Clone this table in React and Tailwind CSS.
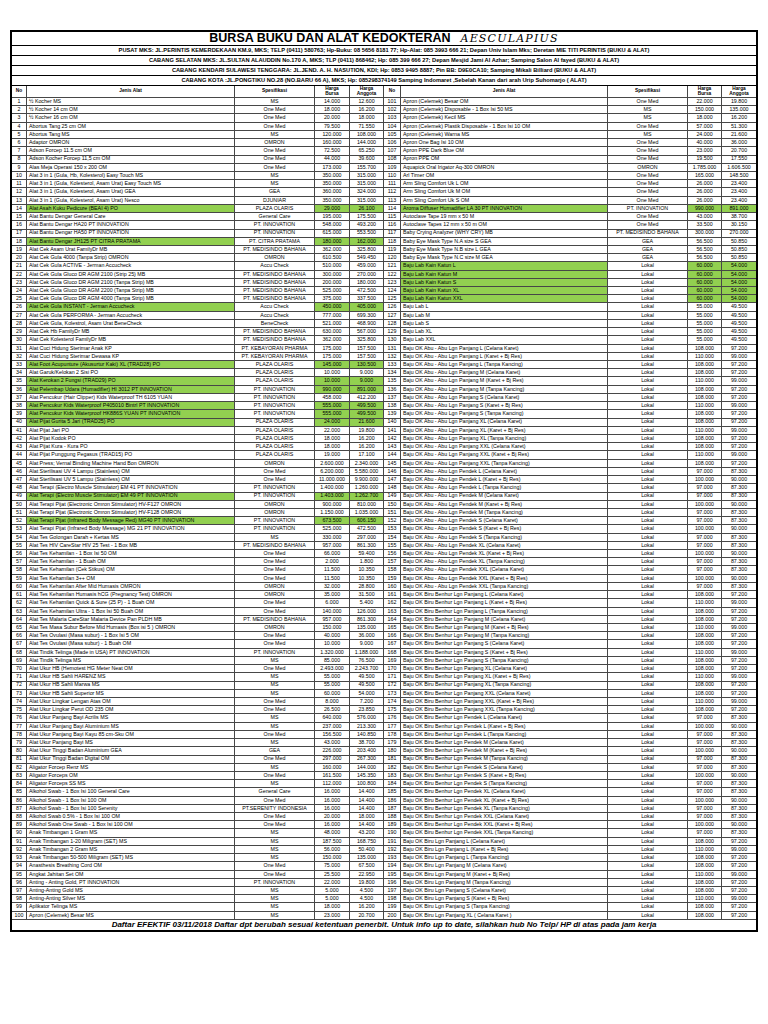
import React from "react";

const COLS = "grid grid-cols-[15px_208px_80px_35px_34px_17px_207px_80px_34px_34px]";
const LINE = "border-[#474747]";

// name | spesifikasi | harga bursa | harga anggota | g = highlighted
const LEFT = `½ Kocher MS|MS|14.000|12.600
½ Kocher 14 cm OM|One Med|18.000|16.200
½ Kocher 16 cm OM|One Med|20.000|18.000
Abortus Tang 25 cm OM|One Med|79.500|71.550
Abortus Tang MS|MS|120.000|108.000
Adaptor OMRON|OMRON|160.000|144.000
Adson Forcep 11.5 cm OM|One Med|72.500|65.250
Adson Kocher Forcep 11,5 cm OM|One Med|44.000|39.600
Alas Meja Operasi 150 x 200 OM|One Med|173.000|155.700
Alat 3 in 1 (Gula, Hb, Kolesterol) Easy Touch MS|MS|350.000|315.000
Alat 3 in 1 (Gula, Kolesterol, Asam Urat) Easy Touch MS|MS|350.000|315.000
Alat 3 in 1 (Gula, Kolesterol, Asam Urat) GEA|GEA|360.000|324.000
Alat 3 in 1 (Gula, Kolesterol, Asam Urat) Nesco|DJUNIAR|350.000|315.000
Alat Asah Kuku Pedicure (BEAI 4) PO|PLAZA OLARIS|29.000|26.100|g
Alat Bantu Dengar General Care|General Care|195.000|175.500
Alat Bantu Dengar HA20 PT INNOVATION|PT. INNOVATION|548.000|493.200
Alat Bantu Dengar HA50 PT INNOVATION|PT. INNOVATION|615.000|553.500
Alat Bantu Dengar JH125 PT CITRA PRATAMA|PT. CITRA PRATAMA|180.000|162.000|g
Alat Cek Asam Urat FamilyDr MB|PT. MEDISINDO BAHANA|362.000|325.800
Alat Cek Gula 4000 (Tanpa Strip) OMRON|OMRON|610.500|549.450
Alat Cek Gula ACTIVE - Jerman Accucheck|Accu Check|510.000|459.000
Alat Cek Gula Gluco DR AGM 2100 (Strip 25) MB|PT. MEDISINDO BAHANA|300.000|270.000
Alat Cek Gula Gluco DR AGM 2100 (Tanpa Strip) MB|PT. MEDISINDO BAHANA|200.000|180.000
Alat Cek Gula Gluco DR AGM 2200 (Tanpa Strip) MB|PT. MEDISINDO BAHANA|525.000|472.500
Alat Cek Gula Gluco DR AGM 4000 (Tanpa Strip) MB|PT. MEDISINDO BAHANA|375.000|337.500
Alat Cek Gula INSTANT - Jerman Accucheck|Accu Check|450.000|405.000|g
Alat Cek Gula PERFORMA - Jerman Accucheck|Accu Check|777.000|699.300
Alat Cek Gula, Kolestrol, Asam Urat BeneCheck|BeneCheck|521.000|468.900
Alat Cek Hb FamilyDr MB|PT. MEDISINDO BAHANA|630.000|567.000
Alat Cek Kolesterol FamilyDr MB|PT. MEDISINDO BAHANA|362.000|325.800
Alat Cuci Hidung Sterimar Anak KP|PT. KEBAYORAN PHARMA|175.000|157.500
Alat Cuci Hidung Sterimar Dewasa KP|PT. KEBAYORAN PHARMA|175.000|157.500
Alat Foot Acupunture (Akusurtur Kaki) XL (TRAD28) PO|PLAZA OLARIS|145.000|130.500|g
Alat Garuk/Kelokan 2 Sisi PO|PLAZA OLARIS|10.000|9.000
Alat Kerokan 2 Fungsi (TRAD29) PO|PLAZA OLARIS|10.000|9.000|g
Alat Pelembap Udara (Humadifier) HI 3012 PT INNOVATION|PT. INNOVATION|990.000|891.000|g
Alat Pencukur (Hair Clipper) Kids Waterproof TH 6105 YUAN|PT. INNOVATION|458.000|412.200
Alat Pencukur Kids Waterproof P405010 Bintrl PT INNOVATION|PT. INNOVATION|555.000|499.500|g
Alat Pencukur Kids Waterproof HK886S YUAN PT INNOVATION|PT. INNOVATION|555.000|499.500|g
Alat Pijat Gurita 5 Jari (TRAD25) PO|PLAZA OLARIS|24.000|21.600|g
Alat Pijat Jari PO|PLAZA OLARIS|22.000|19.800
Alat Pijat Kodok PO|PLAZA OLARIS|18.000|16.200
Alat Pijat Kura - Kura PO|PLAZA OLARIS|18.000|16.200
Alat Pijat Punggung Pegasus (TRAD15) PO|PLAZA OLARIS|19.000|17.100
Alat Press; Vernal Binding Machine Hand Bon OMRON|OMRON|2.600.000|2.340.000
Alat Sterilisasi UV 4 Lampu (Stainless) OM|One Med|6.200.000|5.580.000
Alat Sterilisasi UV 5 Lampu (Stainless) OM|One Med|11.000.000|9.900.000
Alat Terapi (Electro Muscle Stimulator) EM 41 PT INNOVATION|PT. INNOVATION|1.400.000|1.260.000
Alat Terapi (Electro Muscle Stimulator) EM 49 PT INNOVATION|PT. INNOVATION|1.403.000|1.262.700|g
Alat Terapi Pijat (Electronic Omron Stimulator) HV-F127 OMRON|OMRON|900.000|810.000
Alat Terapi Pijat (Electronic Omron Stimulator) HV-F128 OMRON|OMRON|1.150.000|1.035.000
Alat Terapi Pijat (Infrared Body Message Red) MG40 PT INNOVATION|PT. INNOVATION|673.500|606.150|g
Alat Terapi Pijat (Infrared Body Message) MG 21 PT INNOVATION|PT. INNOVATION|525.000|472.500
Alat Tes Golongan Darah + Kertas MS|MS|330.000|297.000
Alat Tes HIV CareStar HIV 25 Test - 1 Box MB|PT. MEDISINDO BAHANA|957.000|861.300
Alat Tes Kehamilan - 1 Box Isi 50 OM|One Med|66.000|59.400
Alat Tes Kehamilan - 1 Buah OM|One Med|2.000|1.800
Alat Tes Kehamilan (Cek Stikus) OM|One Med|11.500|10.350
Alat Tes Kehamilan 3++ OM|One Med|11.500|10.350
Alat Tes Kehamilan After Mid Humasis OMRON|OMRON|32.000|28.800
Alat Tes Kehamilan Humasis hCG (Pregnancy Test) OMRON|OMRON|35.000|31.500
Alat Tes Kehamilan Quick & Sure (25 P) - 1 Buah OM|One Med|6.000|5.400
Alat Tes Kehamilan Ultra - 1 Box Isi 50 Buah OM|One Med|140.000|126.000
Alat Tes Malaria CareStar Malaria Device Pan PLDH MB|PT. MEDISINDO BAHANA|957.000|861.300
Alat Tes Masa Subur Before Mid Humasis (Box isi 5 ) OMRON|OMRON|150.000|135.000
Alat Tes Ovulasi (Masa subur) - 1 Box Isi 5 OM|One Med|40.000|36.000
Alat Tes Ovulasi (Masa subur) - 1 Buah OM|One Med|10.000|9.000
Alat Tindik Telinga  (Made in USA) PT INNOVATION|PT. INNOVATION|1.320.000|1.188.000
Alat Tindik Telinga MS|MS|85.000|76.500
Alat Ukur HB (Hemotest HG Meter Neat OM|One Med|2.493.000|2.243.700
Alat Ukur HB Sahli HARENZ MS|MS|55.000|49.500
Alat Ukur HB Sahli Marwa MS|MS|55.000|49.500
Alat Ukur HB Sahli Superior MS|MS|60.000|54.000
Alat Ukur Lingkar Lengan Atas OM|One Med|8.000|7.200
Alat Ukur Lingkar Perut OD 235 OM|One Med|26.500|23.850
Alat Ukur Panjang Bayi Acrilis MS|MS|640.000|576.000
Alat Ukur Panjang Bayi Aluminium MS|MS|237.000|213.300
Alat Ukur Panjang Bayi Kayu 85 cm-Sku OM|One Med|156.500|140.850
Alat Ukur Panjang Bayi MS|MS|43.000|38.700
Alat Ukur Tinggi Badan Aluminium GEA|GEA|226.000|203.400
Alat Ukur Tinggi Badan Digital OM|One Med|297.000|267.300
Aligator Forcep Renz MS|MS|160.000|144.000
Aligator Forceps OM|One Med|161.500|145.350
Aligator Forceps SS MS|MS|112.000|100.800
Alkohol Swab - 1 Box Isi 100 General Care|General Care|16.000|14.400
Alkohol Swab - 1 Box Isi 100 OM|One Med|16.000|14.400
Alkohol Swab - 1 Box Isi 100 Serenity|PT.SERENITY INDONESIA|16.000|14.400
Alkohol Swab 0.5% - 1 Box Isi 100 OM|One Med|20.000|18.000
Alkohol Swab One Swab - 1 Box Isi 100 OM|One Med|16.000|14.400
Anak Timbangan 1 Gram MS|MS|48.000|43.200
Anak Timbangan 1-20 Miligram  (SET) MS|MS|187.500|168.750
Anak Timbangan 2 Gram MS|MS|56.000|50.400
Anak Timbangan 50-500 Miligram (SET) MS|MS|150.000|135.000
Anasthesis Breathing Cord OM|One Med|75.000|67.500
Angkat Jahitan Set OM|One Med|25.500|22.950
Anting - Anting Gold, PT INNOVATION|PT. INNOVATION|22.000|19.800
Anting-Anting Gold MS|MS|5.000|4.500
Anting-Anting Silver MS|MS|5.000|4.500
Aplikator Telinga MS|MS|18.000|16.200
Apron (Celemek) Besar MS|MS|23.000|20.700`;

const RIGHT_TOP = `Apron (Celemek) Besar OM|One Med|22.000|19.800
Apron (Celemek) Disposable - 1 Box Isi 50 MS|MS|150.000|135.000
Apron (Celemek) Kecil MS|MS|18.000|16.200
Apron (Celemek) Plastik Disposable - 1 Box Isi 10 OM|One Med|57.000|51.300
Apron (Celemek) Warna MS|MS|24.000|21.600
Apron One Bag Isi 10 OM|One Med|40.000|36.000
Apron PPE Dark Blue OM|One Med|23.000|20.700
Apron PPE OM|One Med|19.500|17.550
Aquapick Oral Irigator Aq-300 OMRON|OMRON|1.785.000|1.606.500
Arl Timer OM|One Med|165.000|148.500
Arm Sling Comfort Uk L OM|One Med|26.000|23.400
Arm Sling Comfort Uk M OM|One Med|26.000|23.400
Arm Sling Comfort Uk S OM|One Med|26.000|23.400
Aroma Diffuser Humadifier LA 30 PT INNOVATION|PT. INNOVATION|990.000|891.000|g
Autoclave Tape 19 mm x 50 M|One Med|43.000|38.700
Autoclave Tapes 12 mm x 50 m OM|One Med|33.500|30.150
Baby Crying Analyzer (WHY CRY) MB|PT. MEDISINDO BAHANA|300.000|270.000
Baby Eye Mask Type N.A size S GEA|GEA|56.500|50.850
Baby Eye Mask Type N.B size L GEA|GEA|56.500|50.850
Baby Eye Mask Type N.C size M  GEA|GEA|56.500|50.850
Baju Lab Kain Katun L|Lokal|60.000|54.000|g
Baju Lab Kain Katun M|Lokal|60.000|54.000|g
Baju Lab Kain Katun S|Lokal|60.000|54.000|g
Baju Lab Kain Katun XL|Lokal|60.000|54.000|g
Baju Lab Kain Katun XXL|Lokal|60.000|54.000|g
Baju Lab L|Lokal|55.000|49.500
Baju Lab M|Lokal|55.000|49.500
Baju Lab S|Lokal|55.000|49.500
Baju Lab XL|Lokal|55.000|49.500
Baju Lab XXL|Lokal|55.000|49.500`;

const parse = (txt) =>
  txt.split("\n").map((l) => {
    const [name, spec, bursa, anggota, g] = l.split("|");
    return { name, spec, bursa, anggota, green: g === "g" };
  });

const LONG = { "Celana Karet": ["108.000", "97.200"], "Karet + Bj Res": ["110.000", "99.000"], "Tanpa Kancing": ["108.000", "97.200"] };
const SHORT = { "Celana Karet": ["97.000", "87.300"], "Karet + Bj Res": ["100.000", "90.000"], "Tanpa Kancing": ["97.000", "87.300"] };

const bajuOK = () => {
  const out = [];
  const series = [
    ["Baju OK Abu - Abu Lgn Panjang", LONG, ["L", "M", "S", "XL", "XXL"]],
    ["Baju OK Abu - Abu Lgn Pendek", SHORT, ["L", "M", "S", "XL", "XXL"]],
    ["Baju OK Biru Benhur Lgn Panjang", LONG, ["L", "M", "S", "XL", "XXL"]],
    ["Baju OK Biru Benhur Lgn Pendek", SHORT, ["L", "M", "S", "XL", "XXL"]],
    ["Baju OK Biru Lgn Panjang", LONG, ["L", "M", "S"]],
  ];
  series.forEach(([base, price, sizes]) =>
    sizes.forEach((s) =>
      Object.keys(price).forEach((v) =>
        out.push({ name: `${base} ${s} (${v})`, spec: "Lokal", bursa: price[v][0], anggota: price[v][1] })
      )
    )
  );
  out.push({ name: "Baju OK Biru Lgn Panjang XL ( Celana Karet )", spec: "Lokal", bursa: "108.000", anggota: "97.200" });
  return out;
};

const left = parse(LEFT);
const right = [...parse(RIGHT_TOP), ...bajuOK()];

const cell = `border-r ${LINE} flex items-center overflow-hidden whitespace-nowrap leading-none`;

const Half = ({ no, it }) => (
  <>
    <div className={`${cell} justify-center`}>{no}</div>
    <div className={`${cell} px-[2px] ${it.green ? "bg-[#92d050]" : ""}`}>{it.name}</div>
    <div className={`${cell} justify-center`}>{it.spec}</div>
    <div className={`${cell} justify-center ${it.green ? "bg-[#92d050]" : ""}`}>{it.bursa}</div>
    <div className={`${cell} justify-center last:border-r-0 ${it.green ? "bg-[#92d050]" : ""}`}>{it.anggota}</div>
  </>
);

const HeadHalf = () => (
  <>
    <div className={`${cell} justify-center`}>No</div>
    <div className={`${cell} justify-center`}>Jenis Alat</div>
    <div className={`${cell} justify-center`}>Spesifikasi</div>
    <div className={`${cell} justify-center text-center leading-[6px]`}>Harga<br />Bursa</div>
    <div className={`${cell} justify-center text-center leading-[6px] last:border-r-0`}>Harga<br />Anggota</div>
  </>
);

const ADDR = [
  "PUSAT MKS: JL.PERINTIS KEMERDEKAAN KM.9, MKS; TELP (0411) 580763; Hp-Buku: 08 5656 8181 77; Hp-Alat: 085 3993 666 21; Depan Univ Islam Mks; Deretan MIE TITI PERINTIS (BUKU & ALAT)",
  "CABANG SELATAN MKS: JL.SULTAN ALAUDDIN No.170 A, MKS; TLP (0411) 868462; Hp: 085 399  666 27; Depan Mesjid Jami Al Azhar; Samping Salon Al fayed (BUKU & ALAT)",
  "CABANG KENDARI SULAWESI TENGGARA: JL.JEND. A. H. NASUTION, KDI; Hp: 0853 9495 8887; Pin BB: D9E0CA10; Samping Mikali Billiard (BUKU & ALAT)",
  "CABANG KOTA :JL.PONGTIKU NO.28 (NO.BARU 66 A), MKS; Hp: 085298374149  Samping Indomaret ,Sebelah Kanan dari arah Urip Suhomarjo ( ALAT)",
];

export default function App() {
  return (
    <div className="min-h-screen bg-white pt-[30px] font-['Liberation_Sans',Arial,sans-serif] text-black">
      <div className="ml-[10px] w-[748px] border-2 border-black">
        <div className="h-[14px] border-b border-black flex items-center justify-center gap-[10px] leading-none">
          <span className="text-[12.5px] font-bold">BURSA BUKU DAN ALAT KEDOKTERAN</span>
          <span className="text-[11px] italic font-['DejaVu_Serif',serif] font-light tracking-[1.2px]">AESCULAPIUS</span>
        </div>
        {ADDR.map((a) => (
          <div key={a} className="h-[10px] border-b border-black flex items-center justify-center text-[5.7px] font-bold whitespace-nowrap leading-none">
            {a}
          </div>
        ))}
        <div className={`${COLS} h-[12px] border-b ${LINE} text-[4.8px] font-bold`}>
          <HeadHalf />
          <HeadHalf />
        </div>
        {left.map((it, i) => (
          <div key={i} className={`${COLS} h-[8.22px] border-b ${LINE} text-[5.3px]`}>
            <Half no={i + 1} it={it} />
            <Half no={i + 101} it={right[i]} />
          </div>
        ))}
        <div className="h-[10px] flex items-center justify-center text-[8px] font-bold italic whitespace-nowrap leading-none">
          Daftar EFEKTIF 03/11/2018 Daftar dpt berubah sesuai ketentuan penerbit. Untuk info up to date, silahkan hub No Telp/ HP di atas pada jam kerja
        </div>
      </div>
    </div>
  );
}
